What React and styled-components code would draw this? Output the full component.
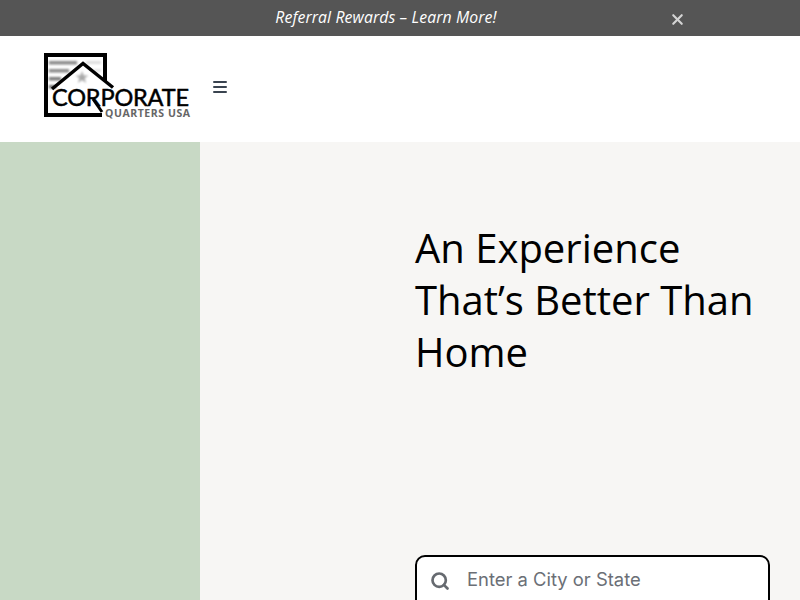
import React from "react";
import styled, { createGlobalStyle } from "styled-components";
import { X, Search } from "lucide-react";

const GlobalStyle = createGlobalStyle`
  html, body {
    margin: 0;
    height: 600px;
    overflow: hidden;
    background: #fff;
    font-family: "Open Sans", sans-serif;
  }
`;

const Page = styled.div`
  width: 800px;
  height: 600px;
  display: flex;
  flex-direction: column;
  overflow: hidden;
`;

const Banner = styled.div`
  height: 36px;
  flex: none;
  background: #555555;
  display: grid;
  grid-template-columns: 1fr 28px;
  align-items: center;
  padding-right: 109px;
`;

const BannerText = styled.a`
  font-family: "Open Sans", sans-serif;
  font-style: italic;
  font-size: 15.8px;
  letter-spacing: 0.1px;
  color: #ffffff;
  text-align: center;
  padding-left: 109px;
  margin-top: -2px;
`;

const CloseButton = styled.button`
  border: 0;
  background: none;
  padding: 0;
  margin-top: 3px;
  display: flex;
  justify-content: center;
  color: #d4d4d4;
`;

const Header = styled.header`
  height: 106px;
  flex: none;
  background: #ffffff;
  display: flex;
  align-items: flex-start;
  padding: 17px 0 0 44px;
  box-sizing: border-box;
`;

const MenuButton = styled.button`
  border: 0;
  background: none;
  padding: 0;
  margin: 28px 0 0 22px;
  width: 14px;
  display: flex;
  flex-direction: column;
  gap: 3px;
`;

const MenuLine = styled.span`
  display: block;
  height: 2px;
  background: #3a4450;
  border-radius: 1px;
`;

const Main = styled.main`
  flex: 1;
  display: grid;
  grid-template-columns: 200px 1fr;
`;

const Accent = styled.div`
  background: #c8d9c5;
`;

const Hero = styled.section`
  background: #f7f6f4;
  padding: 80px 30px 0 215px;
  display: flex;
  flex-direction: column;
`;

const Title = styled.h1`
  margin: 0;
  font-family: "Open Sans", sans-serif;
  font-weight: 400;
  font-size: 40px;
  line-height: 52px;
  color: #000000;
`;

const SearchBox = styled.div`
  margin-top: 177px;
  height: 60px;
  flex: none;
  box-sizing: border-box;
  border: 2px solid #000000;
  border-radius: 10px;
  background: #ffffff;
  display: flex;
  align-items: flex-start;
  padding: 10px 0 0 13px;
  gap: 17px;
  color: #666a70;
`;

const SearchIcon = styled(Search)`
  margin-top: 4px;
  flex: none;
`;

const Placeholder = styled.span`
  font-family: "Inter", sans-serif;
  font-size: 18.4px;
  line-height: 24px;
  color: #6b6f76;
`;

const Logo = () => (
  <svg width="147" height="66" viewBox="0 0 147 66" aria-label="Corporate Quarters USA">
    <defs>
      <filter id="soft">
        <feGaussianBlur stdDeviation="0.9" />
      </filter>
    </defs>
    <g filter="url(#soft)">
      <rect x="5" y="8" width="28" height="3.500" fill="#8a8a8a" />
      <rect x="5" y="16" width="20" height="3.500" fill="#8a8a8a" />
      <rect x="5" y="24" width="12" height="3.500" fill="#7a7a7a" />
      <rect x="5" y="32" width="7" height="3.500" fill="#707070" />
      <rect x="42" y="8" width="15" height="3" fill="#dddddd" />
      <rect x="50" y="16" width="7" height="3" fill="#e2e2e2" />
      <path d="M38 18l1.700 4.500h4.800l-3.900 2.800 1.500 4.700-4.100-2.900-4.100 2.900 1.500-4.700-3.900-2.800h4.800z" fill="#a8a8a8" />
    </g>
    <path d="M61 28V2H2v60h56" fill="none" stroke="#000" strokeWidth="4" />
    <path d="M8 36L39 10.500l30 24" fill="none" stroke="#000" strokeWidth="3.500" />
    <path d="M49 46l9 13" fill="none" stroke="#000" strokeWidth="3" />
    <text
      x="8"
      y="53"
      fontFamily="Lato, sans-serif"
      fontSize="23.500"
      textLength="137"
      stroke="#000"
      strokeWidth="0.5"
      fill="#000"
    >
      CORPORATE
    </text>
    <text
      x="61"
      y="64"
      fontFamily="Open Sans, sans-serif"
      fontWeight="700"
      fontSize="10.500"
      textLength="85"
      fill="#666"
    >
      QUARTERS USA
    </text>
  </svg>
);

const App = () => (
  <Page>
    <GlobalStyle />
    <Banner>
      <BannerText>Referral Rewards – Learn More!</BannerText>
      <CloseButton aria-label="Close">
        <X size={17} strokeWidth={3} />
      </CloseButton>
    </Banner>
    <Header>
      <Logo />
      <MenuButton aria-label="Menu">
        <MenuLine />
        <MenuLine />
        <MenuLine />
      </MenuButton>
    </Header>
    <Main>
      <Accent />
      <Hero>
        <Title>
          An Experience
          <br />
          That’s Better Than
          <br />
          Home
        </Title>
        <SearchBox>
          <SearchIcon size={20} strokeWidth={3.2} />
          <Placeholder>Enter a City or State</Placeholder>
        </SearchBox>
      </Hero>
    </Main>
  </Page>
);

export default App;
